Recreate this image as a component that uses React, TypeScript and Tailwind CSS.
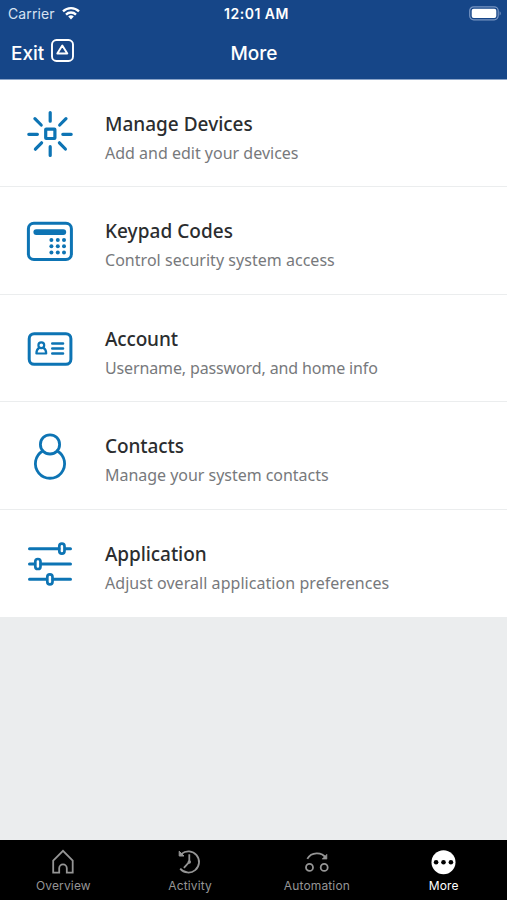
import type { ReactNode } from 'react';

type Row = { title: string; text: string; titleClass: string; textClass: string; icon: ReactNode };

const rows: Row[] = [
  {
    title: 'Manage Devices',
    text: 'Add and edit your devices',
    titleClass: '',
    textClass: '',
    icon: (
      <g strokeWidth="3.2">
        <rect x="19.7" y="19.1" width="9.2" height="9.4" rx="0.5" />
        <path d="M24.2 2.5v8.7M24.2 36.7v8.8M2.8 24.3h8.6M36.8 24.3h8.4M8.9 8.6l6.3 6.4M40 8.6l-6.3 6.4M9.4 39.2l6.2-6.4M39.4 39l-6-6.2" />
      </g>
    ),
  },
  {
    title: 'Keypad Codes',
    text: 'Control security system access',
    titleClass: 'tracking-[0.04px]',
    textClass: 'tracking-[0.03px]',
    icon: (
      <g>
        <rect x="2.4" y="6.3" width="43" height="36.3" rx="5.5" />
        <path d="M10.3 15.1h27" strokeWidth="5.8" />
        <g fill="#0d74b4" stroke="none">
          {[23, 29.2, 35.4].map((y) =>
            [25.4, 31.8, 38].map((x) => <circle key={`${x}-${y}`} cx={x} cy={y} r="2" />)
          )}
        </g>
      </g>
    ),
  },
  {
    title: 'Account',
    text: 'Username, password, and home info',
    titleClass: 'tracking-[-0.15px]',
    textClass: 'tracking-[-0.13px]',
    icon: (
      <g>
        <rect x="3.2" y="8.7" width="41.7" height="30.6" rx="5" />
        <g strokeWidth="2.2">
          <circle cx="15.3" cy="20.3" r="2.9" />
          <path d="M13 23c-1.7 1-2.6 3-2.6 5.5h9.8c0-2.5-.9-4.5-2.6-5.5" />
        </g>
        <path d="M26.3 18.5h10.7M26.3 23.5h10.7M26.3 28.5h10.7" strokeWidth="2.6" />
      </g>
    ),
  },
  {
    title: 'Contacts',
    text: 'Manage your system contacts',
    titleClass: 'tracking-[-0.08px]',
    textClass: 'tracking-[-0.03px]',
    icon: (
      <g strokeWidth="2.8">
        <circle cx="24" cy="12.4" r="9.6" />
        <path d="M16.7 19a14.6 14.6 0 1 0 14.6 0" />
      </g>
    ),
  },
  {
    title: 'Application',
    text: 'Adjust overall application preferences',
    titleClass: 'tracking-[-0.08px]',
    textClass: 'tracking-[0.05px]',
    icon: (
      <g strokeWidth="3">
        <path d="M3.5 8.7h29.5M39.3 8.7h5.2M3.5 24h5.2M15 24h29.5M3.5 39.3h17.2M27 39.3h17.5" />
        <g strokeWidth="2.7">
          <rect x="33.3" y="3.7" width="5.2" height="10" rx="2.6" />
          <rect x="9.3" y="19" width="5.2" height="10" rx="2.6" />
          <rect x="21.3" y="34.3" width="5.2" height="10" rx="2.6" />
        </g>
      </g>
    ),
  },
];

const tabs = [
  {
    label: 'Overview',
    active: false,
    icon: <path d="M4.2 12.7 14 2.9l9.7 9.8V24.6h-5.9v-4.4a3.8 3.8 0 0 0-7.6 0v4.4h-6z" />,
  },
  {
    label: 'Activity',
    active: false,
    icon: (
      <g>
        <path d="M5.5 5.9a10.6 10.6 0 1 1-1.3 14.7" />
        <path d="M3.2 3.2v4.8h4.8z" fill="currentColor" strokeWidth="1" />
        <path d="M13.3 6.2v7.6l-5.4 6" />
        <circle cx="13.3" cy="14" r="1.7" fill="currentColor" stroke="none" />
      </g>
    ),
  },
  {
    label: 'Automation',
    active: false,
    icon: (
      <g>
        <path d="M4.3 10.9c4-7.3 14.5-7.3 18.6-.9" />
        <path d="M23.9 6.2v4.9h-4.8z" fill="currentColor" strokeWidth="0.6" />
        <circle cx="6.5" cy="19.4" r="3.5" />
        <circle cx="21.2" cy="19.4" r="3.5" />
      </g>
    ),
  },
  {
    label: 'More',
    active: true,
    icon: (
      <g stroke="none">
        <circle cx="13.5" cy="14.2" r="12" fill="currentColor" />
        <g fill="#000">
          <circle cx="6.1" cy="14.2" r="2.3" />
          <circle cx="13.5" cy="14.2" r="2.3" />
          <circle cx="20.9" cy="14.2" r="2.3" />
        </g>
      </g>
    ),
  },
];

function StatusBar() {
  return (
    <div className="grid h-[27px] grid-cols-3 items-center pl-[8px] pr-[5px] text-[14px]">
      <div className="flex items-center gap-[7px]">
        <span className="tracking-[0.1px] text-[#d7e2f2]">Carrier</span>
        <svg className="-mt-px" width="18" height="14" viewBox="0 0 18 14" fill="none" stroke="#fff" strokeWidth="2.3">
          <path d="M1 5.3a11.5 11.5 0 0 1 16 0M4 8.6a7 7 0 0 1 10 0" />
          <path d="M6.2 10.6a4 4 0 0 1 5.6 0L9 13.4z" fill="#fff" stroke="none" />
        </svg>
      </div>
      <span className="pl-[3px] text-center font-semibold tracking-[0.5px]">12:01 AM</span>
      <svg className="-mt-px justify-self-end" width="33" height="15" viewBox="0 0 33 15">
        <rect x="0.7" y="0.8" width="28.5" height="13" rx="4" fill="none" stroke="#7895c2" strokeWidth="1.2" />
        <rect x="2.7" y="2.7" width="24.6" height="9.2" rx="2" fill="#fff" />
        <path d="M30.6 5.2c1.5.6 1.5 3.8 0 4.4z" fill="#7895c2" />
      </svg>
    </div>
  );
}

export default function App() {
  return (
    <div className="flex h-[900px] w-[507px] flex-col overflow-hidden bg-[#ebedee] font-['Inter',sans-serif]">
      <header className="h-[80px] shrink-0 border-b border-[#8ba4c8] bg-[#164688] text-white">
        <StatusBar />
        <div className="grid h-[52px] grid-cols-3 items-center px-[11px] text-[19px] font-medium">
          <div className="flex items-center gap-[7px]">
            <span className="pt-[2px]">Exit</span>
            <svg className="-mt-[5px]" width="23" height="23" viewBox="0 0 23 23" fill="none" stroke="#fff" strokeLinejoin="round">
              <rect x="1" y="1" width="21" height="21" rx="4.5" strokeWidth="1.9" />
              <path d="M11.3 6.5 16.3 14.5H6.3z" strokeWidth="1.9" />
            </svg>
          </div>
          <h1 className="pl-px pt-[2px] text-center">More</h1>
        </div>
      </header>

      <main className="grow font-['Noto_Sans',sans-serif]">
        {rows.map((row) => (
          <div
            key={row.title}
            className="flex h-[107.4px] items-start border-b border-[#ebedee] bg-white pl-[26px] last:border-b-0"
          >
            <svg
              className="mt-[30px] shrink-0"
              width="48"
              height="48"
              viewBox="0 0 48 48"
              fill="none"
              stroke="#0d74b4"
              strokeWidth="3"
              strokeLinecap="round"
              strokeLinejoin="round"
            >
              {row.icon}
            </svg>
            <div className="ml-[31px] mt-[30px] whitespace-nowrap">
              <h2 className={`text-[19px] font-medium leading-[28px] text-[#2b2d2f] ${row.titleClass}`}>{row.title}</h2>
              <p className={`mt-[2px] text-[16px] leading-[26px] text-[#77797c] ${row.textClass}`}>{row.text}</p>
            </div>
          </div>
        ))}
      </main>

      <nav className="grid h-[60px] shrink-0 grid-cols-4 bg-black">
        {tabs.map((tab) => (
          <div
            key={tab.label}
            className={`flex flex-col items-center pt-[8px] text-[12px] ${tab.active ? 'text-white' : 'text-[#959595]'}`}
          >
            <svg width="28" height="28" viewBox="0 0 28 28" fill="none" stroke="currentColor" strokeWidth="1.8">
              {tab.icon}
            </svg>
            <span className="mt-[1px] leading-[18px] tracking-[0.15px]">{tab.label}</span>
          </div>
        ))}
      </nav>
    </div>
  );
}
